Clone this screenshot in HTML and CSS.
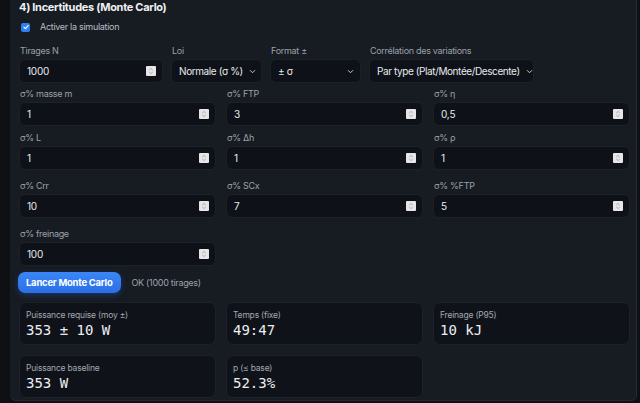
FILE: index.html
```html
<!DOCTYPE html>
<html lang="fr">
<head>
<meta charset="utf-8">
<title>Incertitudes (Monte Carlo)</title>
<link rel="stylesheet" href="styles.css">
</head>
<body>
<div class="page">
  <section class="card">
    <h2 class="title">4) Incertitudes (Monte Carlo)</h2>
    <label class="check">
      <span class="box"><svg viewBox="0 0 10 10" width="10" height="10"><path d="M2.4 5.2 L4.3 7 L7.7 3.2" fill="none" stroke="#fff" stroke-width="1.5" stroke-linecap="round" stroke-linejoin="round"/></svg></span>
      <span>Activer la simulation</span>
    </label>

    <div class="toprow">
      <div class="field w-n">
        <label class="lbl">Tirages N</label>
        <div class="ctl"><input class="inp" value="1000"><span class="spin"><svg viewBox="0 0 10 10" width="10" height="10"><path d="M3.3 4 L5 2.4 L6.7 4 M3.3 6 L5 7.6 L6.7 6" fill="none" stroke="#9a9ca0" stroke-width="0.8"/></svg></span></div>
      </div>
      <div class="field w-sel">
        <label class="lbl">Loi</label>
        <div class="ctl sel"><span class="val">Normale (σ %)</span><svg class="chev" viewBox="0 0 8 6" width="7" height="5"><path d="M1 1.5 L4 4.5 L7 1.5" fill="none" stroke="#c7cbd1" stroke-width="1.2"/></svg></div>
      </div>
      <div class="field w-sel">
        <label class="lbl">Format ±</label>
        <div class="ctl sel"><span class="val">± σ</span><svg class="chev" viewBox="0 0 8 6" width="7" height="5"><path d="M1 1.5 L4 4.5 L7 1.5" fill="none" stroke="#c7cbd1" stroke-width="1.2"/></svg></div>
      </div>
      <div class="field w-cor">
        <label class="lbl">Corrélation des variations</label>
        <div class="ctl sel"><span class="val">Par type (Plat/Montée/Descente)</span><svg class="chev" viewBox="0 0 8 6" width="7" height="5"><path d="M1 1.5 L4 4.5 L7 1.5" fill="none" stroke="#c7cbd1" stroke-width="1.2"/></svg></div>
      </div>
    </div>

    <div class="grid">
      <div class="field"><label class="lbl">σ% masse m</label><div class="ctl"><input class="inp" value="1"><span class="spin"><svg viewBox="0 0 10 10" width="10" height="10"><path d="M3.3 4 L5 2.4 L6.7 4 M3.3 6 L5 7.6 L6.7 6" fill="none" stroke="#9a9ca0" stroke-width="0.8"/></svg></span></div></div>
      <div class="field"><label class="lbl">σ% FTP</label><div class="ctl"><input class="inp" value="3"><span class="spin"><svg viewBox="0 0 10 10" width="10" height="10"><path d="M3.3 4 L5 2.4 L6.7 4 M3.3 6 L5 7.6 L6.7 6" fill="none" stroke="#9a9ca0" stroke-width="0.8"/></svg></span></div></div>
      <div class="field"><label class="lbl">σ% η</label><div class="ctl"><input class="inp" value="0,5"><span class="spin"><svg viewBox="0 0 10 10" width="10" height="10"><path d="M3.3 4 L5 2.4 L6.7 4 M3.3 6 L5 7.6 L6.7 6" fill="none" stroke="#9a9ca0" stroke-width="0.8"/></svg></span></div></div>

      <div class="field"><label class="lbl">σ% L</label><div class="ctl"><input class="inp" value="1"><span class="spin"><svg viewBox="0 0 10 10" width="10" height="10"><path d="M3.3 4 L5 2.4 L6.7 4 M3.3 6 L5 7.6 L6.7 6" fill="none" stroke="#9a9ca0" stroke-width="0.8"/></svg></span></div></div>
      <div class="field"><label class="lbl">σ% Δh</label><div class="ctl"><input class="inp" value="1"><span class="spin"><svg viewBox="0 0 10 10" width="10" height="10"><path d="M3.3 4 L5 2.4 L6.7 4 M3.3 6 L5 7.6 L6.7 6" fill="none" stroke="#9a9ca0" stroke-width="0.8"/></svg></span></div></div>
      <div class="field"><label class="lbl">σ% ρ</label><div class="ctl"><input class="inp" value="1"><span class="spin"><svg viewBox="0 0 10 10" width="10" height="10"><path d="M3.3 4 L5 2.4 L6.7 4 M3.3 6 L5 7.6 L6.7 6" fill="none" stroke="#9a9ca0" stroke-width="0.8"/></svg></span></div></div>

      <div class="field lower"><label class="lbl">σ% Crr</label><div class="ctl"><input class="inp" value="10"><span class="spin"><svg viewBox="0 0 10 10" width="10" height="10"><path d="M3.3 4 L5 2.4 L6.7 4 M3.3 6 L5 7.6 L6.7 6" fill="none" stroke="#9a9ca0" stroke-width="0.8"/></svg></span></div></div>
      <div class="field lower"><label class="lbl">σ% SCx</label><div class="ctl"><input class="inp" value="7"><span class="spin"><svg viewBox="0 0 10 10" width="10" height="10"><path d="M3.3 4 L5 2.4 L6.7 4 M3.3 6 L5 7.6 L6.7 6" fill="none" stroke="#9a9ca0" stroke-width="0.8"/></svg></span></div></div>
      <div class="field lower"><label class="lbl">σ% %FTP</label><div class="ctl"><input class="inp" value="5"><span class="spin"><svg viewBox="0 0 10 10" width="10" height="10"><path d="M3.3 4 L5 2.4 L6.7 4 M3.3 6 L5 7.6 L6.7 6" fill="none" stroke="#9a9ca0" stroke-width="0.8"/></svg></span></div></div>

      <div class="field lower"><label class="lbl">σ% freinage</label><div class="ctl"><input class="inp" value="100"><span class="spin"><svg viewBox="0 0 10 10" width="10" height="10"><path d="M3.3 4 L5 2.4 L6.7 4 M3.3 6 L5 7.6 L6.7 6" fill="none" stroke="#9a9ca0" stroke-width="0.8"/></svg></span></div></div>
    </div>

    <div class="actions">
      <button class="btn">Lancer Monte Carlo</button>
      <span class="status">OK (1000 tirages)</span>
    </div>

    <div class="stats">
      <div class="stat"><div class="s-lbl">Puissance requise (moy ±)</div><div class="s-val">353 ± 10 W</div></div>
      <div class="stat"><div class="s-lbl">Temps (fixe)</div><div class="s-val">49:47</div></div>
      <div class="stat"><div class="s-lbl">Freinage (P95)</div><div class="s-val">10 kJ</div></div>
      <div class="stat"><div class="s-lbl">Puissance baseline</div><div class="s-val">353 W</div></div>
      <div class="stat"><div class="s-lbl">p (≤ base)</div><div class="s-val">52.3%</div></div>
    </div>
  </section>
</div>
</body>
</html>
```

FILE: styles.css
```css
* { box-sizing: border-box; }

html, body {
  margin: 0;
  padding: 0;
  background: #0e1014;
  width: 640px;
  height: 403px;
  overflow: hidden;
  font-family: Inter, "Noto Sans", "DejaVu Sans", sans-serif;
  color: #e6e8ec;
}

.page {
  padding-left: 10px;
  height: 403px;
}

.card {
  margin-top: -12px;
  padding: 12px 6px 2px 9px;
  background: #171b22;
  border-right: 1px solid #272c35;
  border-bottom: 1px solid #242931;
  border-radius: 0 0 6px 6px;
  width: 627px;
}

.title {
  margin: 0;
  font-size: 11px;
  line-height: 14px;
  font-weight: 700;
  letter-spacing: -0.3px;
  color: #eef0f3;
}

.check {
  display: flex;
  align-items: center;
  gap: 10px;
  margin: 7px 0 0 2px;
  font-size: 9px;
  line-height: 12px;
  letter-spacing: -0.3px;
  color: #b9bec6;
}

.box {
  width: 9px;
  height: 9px;
  border-radius: 2px;
  background: #2f7ff5;
  display: flex;
  align-items: center;
  justify-content: center;
}
.box svg { width: 8px; height: 8px; }

.toprow {
  display: flex;
  gap: 8px;
  margin-top: 12px;
}

.field {
  display: flex;
  flex-direction: column;
  gap: 2px;
  min-width: 0;
}

.w-n { width: 144px; }
.w-sel { width: 91px; }
.w-cor { width: 165px; }

.lbl {
  font-size: 9px;
  line-height: 12px;
  letter-spacing: -0.3px;
  color: #9ba1aa;
  padding-left: 1px;
}

.ctl {
  height: 24px;
  display: flex;
  align-items: center;
  background: #0e1218;
  border: 1px solid #1c2129;
  border-radius: 6px;
  padding: 0 6px 0 7px;
}

.inp {
  flex: 1;
  min-width: 0;
  border: 0;
  outline: 0;
  background: transparent;
  color: #e8eaee;
  font: inherit;
  font-size: 10px;
  letter-spacing: -0.2px;
  padding: 0;
}

.spin {
  width: 10px;
  height: 10px;
  background: #e6e6e8;
  border-radius: 1px;
  display: flex;
  flex: none;
}

.sel {
  justify-content: space-between;
  gap: 6px;
  padding-right: 6px;
}
.sel .val {
  font-size: 10px;
  letter-spacing: -0.4px;
  color: #e8eaee;
  white-space: nowrap;
}
.chev { flex: none; }

.grid {
  display: grid;
  grid-template-columns: repeat(3, 197px);
  column-gap: 10px;
  row-gap: 6px;
  margin-top: 5px;
}
.grid .lower { margin-top: 4px; }

.actions {
  display: flex;
  align-items: center;
  gap: 11px;
  margin-top: 6px;
  margin-left: -1px;
}

.btn {
  height: 21px;
  padding: 0 8px;
  border: 0;
  border-radius: 7px;
  background: linear-gradient(180deg, #3b86f7, #2a6ee6);
  color: #fff;
  font: inherit;
  font-size: 9.5px;
  letter-spacing: -0.25px;
  font-weight: 700;
  box-shadow: 0 2px 6px rgba(37, 99, 235, 0.35);
}

.status {
  font-size: 9px;
  letter-spacing: -0.3px;
  color: #9ba1aa;
}

.stats {
  display: grid;
  grid-template-columns: repeat(3, 197px);
  column-gap: 10px;
  row-gap: 10px;
  margin-top: 9px;
}

.stat {
  height: 43px;
  background: #0f1319;
  border: 1px solid #1d222a;
  border-radius: 7px;
  padding: 6px 6px 0 6px;
}

.s-lbl {
  font-size: 8.5px;
  line-height: 12px;
  letter-spacing: -0.2px;
  color: #a2a8b0;
}

.s-val {
  font-family: "DejaVu Sans Mono", "Liberation Mono", monospace;
  font-size: 14px;
  line-height: 18px;
  color: #eceef1;
  margin-top: 0;
}
```
